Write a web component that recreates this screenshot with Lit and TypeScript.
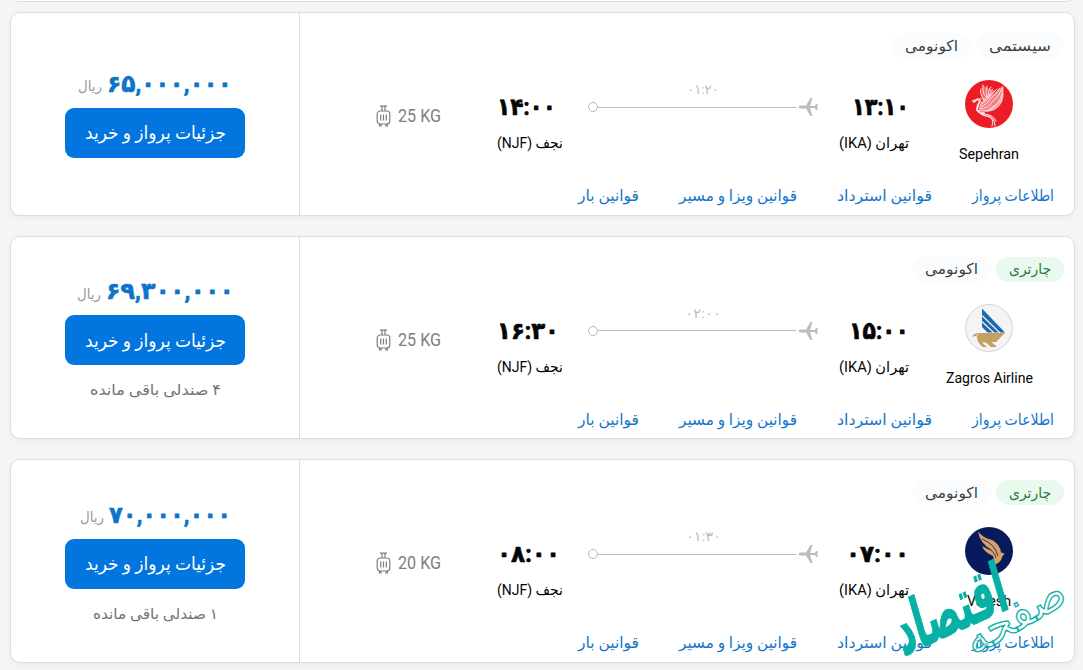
import { LitElement, html, svg, css } from "lit";
import { customElement, property } from "lit/decorators.js";

type Label = [text: string, width: number];

interface Flight {
  tags: { label: Label; charter?: boolean }[];
  logo: "sepehran" | "zagros" | "varesh";
  airline: Label;
  departure: Label;
  duration: Label;
  arrival: Label;
  baggage: string;
  price: Label;
  seats?: Label;
}

const FLIGHTS: Flight[] = [
  {
    tags: [{ label: ["سیستمی", 62] }, { label: ["اکونومی", 53] }],
    logo: "sepehran",
    airline: ["Sepehran", 60],
    departure: ["۱۳:۱۰", 57],
    duration: ["۰۱:۲۰", 32],
    arrival: ["۱۴:۰۰", 59],
    baggage: "25 KG",
    price: ["۶۵,۰۰۰,۰۰۰", 125],
  },
  {
    tags: [{ label: ["چارتری", 42], charter: true }, { label: ["اکونومی", 53] }],
    logo: "zagros",
    airline: ["Zagros Airline", 87],
    departure: ["۱۵:۰۰", 60],
    duration: ["۰۲:۰۰", 36],
    arrival: ["۱۶:۳۰", 62],
    baggage: "25 KG",
    price: ["۶۹,۳۰۰,۰۰۰", 128],
    seats: ["۴ صندلی باقی مانده", 131],
  },
  {
    tags: [{ label: ["چارتری", 42], charter: true }, { label: ["اکونومی", 53] }],
    logo: "varesh",
    airline: ["Varesh", 44],
    departure: ["۰۷:۰۰", 63],
    duration: ["۰۱:۳۰", 35],
    arrival: ["۰۸:۰۰", 63],
    baggage: "20 KG",
    price: ["۷۰,۰۰۰,۰۰۰", 122],
    seats: ["۱ صندلی باقی مانده", 125],
  },
];

const LINKS: Label[] = [
  ["اطلاعات پرواز", 82],
  ["قوانین استرداد", 95],
  ["قوانین ویزا و مسیر", 118],
  ["قوانین بار", 61],
];

/** A single line of text set to an exact measure. */
@customElement("fit-text")
export class FitText extends LitElement {
  @property() text = "";
  @property({ type: Number }) measure = 50;
  @property({ type: Number }) size = 15;

  static styles = css`
    :host {
      display: block;
      flex: none;
      line-height: 0;
    }
    .line {
      display: block;
      overflow: visible;
      fill: currentColor;
      stroke: currentColor;
      stroke-width: var(--extra-weight, 0);
      stroke-linejoin: round;
    }
  `;

  render() {
    const h = Math.round(this.size * 1.6);
    return html`<svg class="line" width=${this.measure} height=${h}>
      <text
        x=${this.measure / 2}
        y=${h / 2 + this.size * 0.36}
        text-anchor="middle"
        font-size=${this.size}
        textLength=${this.measure}
        lengthAdjust="spacingAndGlyphs"
      >${this.text}</text>
    </svg>`;
  }
}

@customElement("airline-logo")
export class AirlineLogo extends LitElement {
  @property() name = "";

  static styles = css`
    :host {
      display: block;
      width: 48px;
      height: 48px;
    }
    .mark {
      display: block;
    }
  `;

  private sepehran() {
    return svg`
      <circle cx="24" cy="24" r="24" fill="#ec1c27" />
      <path fill="#fbd9da" fill-opacity=".55" d="M14 31Q13 24 20 19Q29 14 38 6Q40 18 36 24Q32 31 22 32Z" />
      <path fill="#fbd9da" fill-opacity=".4" d="M19 20Q14 13 18 5Q22 9 28 9Q25 14 24 18Z" />
      <g fill="none" stroke="#fde6e6" stroke-linecap="round">
        <path stroke-width=".9" d="M14 31Q22 32 29 27Q37 21 38 7M15 29Q23 29 27 22Q34 17 37 8M15 27Q22 25 25 19Q32 14 35 8M15 25Q21 22 24 17Q29 12 32 9M16 23Q21 17 29 11M21 31Q30 31 36 22L38 14M25 29L37 20" />
        <path stroke-width=".9" d="M22 18Q17 15 18 5M22 17Q20 11 22 6M23 17Q23 10 26 7M24 17Q25 12 28 9M19 20Q14 13 16 9M13 20Q17 17 20 20" />
        <path stroke-width="2" d="M9 22Q13 17 15 21Q12 25 12 30Q15 34 19 33" />
        <path stroke-width="1" d="M15 33Q18 37 24 36Q30 38 30 46M16 34Q22 35 27 39Q29 42 27 46M18 34Q28 34 31 41M7 21L10 20" />
      </g>`;
  }

  private zagros() {
    return svg`
      <circle cx="24" cy="24" r="23.5" fill="#f4f4f5" stroke="#d3d4d6" />
      <path fill="#1d69ae" d="M17 4.500L40 28.500H22L17 24Z" />
      <path fill="none" stroke="#f4f4f5" stroke-width="1.1" d="M17 11.500L35 29M17 17.500L29 29" />
      <path fill="#f4f4f5" d="M17 23L23 29H17Z" />
      <path fill="#c4a063" d="M7 33Q9 29 14 29L40 29L31 38H26.500L32 43H26L21 38.500L17 38.500L22 43H18Q12 39 12 32.500L10 32Z" />
      <circle cx="12.300" cy="31" r=".7" fill="#fff" />`;
  }

  private varesh() {
    return svg`
      <circle cx="24" cy="24" r="24" fill="#071b5c" />
      <path fill="#d8a068" d="M13 4.500Q18 11 27 13Q35 17 36 25.500L39.500 26.500Q37 29 36 33Q32 39 24 38Q31 34 28 29Q19 25 17 19Q22 22 27 23Q15 17 13 4.500Z" />
      <path fill="none" stroke="#071b5c" stroke-width=".8" d="M17 12Q30 17 33 29M21 21Q29 23 31 31" />`;
  }

  render() {
    const art =
      this.name === "sepehran" ? this.sepehran() : this.name === "zagros" ? this.zagros() : this.varesh();
    return html`<svg class="mark" width="48" height="48" viewBox="0 0 48 48">${art}</svg>`;
  }
}

@customElement("flight-card")
export class FlightCard extends LitElement {
  @property({ attribute: false }) flight!: Flight;

  static styles = css`
    :host {
      display: flex;
      box-sizing: border-box;
      height: 203.5px;
      border: 1px solid #dcdddf;
      border-radius: 10px;
      background: #fff;
      box-shadow: 0 2px 6px rgba(0, 0, 0, 0.05);
      overflow: hidden;
    }
    .main {
      flex: 1;
      display: flex;
      flex-direction: column;
    }
    .tags {
      display: flex;
      gap: 5px;
      padding: 20px 10px 0;
    }
    .tag {
      display: flex;
      align-items: center;
      height: 25px;
      padding: 0 13px;
      border-radius: 13px;
      background: #fafcfd;
      color: #3b3f45;
    }
    .charter {
      background: #e9f9ee;
      color: #2f8044;
    }
    .route {
      display: flex;
      height: 115px;
      padding-right: 25px;
    }
    .airline {
      display: flex;
      flex-direction: column;
      align-items: center;
      width: 120px;
      padding-top: 22px;
      gap: 13px;
    }
    .stop {
      display: flex;
      flex-direction: column;
      width: 70px;
      padding-top: 29px;
      gap: 6px;
    }
    .from {
      margin-right: 20px;
    }
    .to {
      margin-right: 21px;
      align-items: flex-end;
    }
    .time {
      font-weight: 700;
      --extra-weight: 0.7px;
    }
    .path {
      width: 230px;
      margin-right: 21px;
      padding-top: 21px;
      display: flex;
      flex-direction: column;
      align-items: center;
      color: #b9bcc1;
    }
    .track {
      display: flex;
      align-items: center;
      align-self: stretch;
      height: 20px;
      margin-top: -3px;
    }
    .line {
      flex: 1;
      height: 1px;
      margin-right: 2px;
      background: #b9bcc1;
    }
    .dot {
      box-sizing: border-box;
      width: 10px;
      height: 10px;
      border: 1px solid #b4b7bb;
      border-radius: 50%;
    }
    .bag {
      display: flex;
      direction: ltr;
      align-items: center;
      gap: 7px;
      height: 24px;
      margin: 46px 56px 0 0;
      color: #7b7e82;
    }
    .links {
      display: flex;
      gap: 40px;
      padding: 10px 20px 0;
      color: #1376c8;
    }
    .offer {
      box-sizing: border-box;
      width: 289px;
      border-right: 1px solid #dcdddf;
      display: flex;
      flex-direction: column;
      align-items: center;
      justify-content: center;
    }
    .price {
      display: flex;
      direction: ltr;
      align-items: center;
      gap: 5px;
      height: 38px;
      color: #0d74c9;
    }
    .amount {
      font-weight: 700;
      margin-top: -12px;
      --extra-weight: 0.6px;
    }
    .unit {
      margin-top: -5px;
      color: #96999e;
    }
    .buy {
      display: flex;
      align-items: center;
      justify-content: center;
      width: 180px;
      height: 50px;
      padding: 0;
      border: 0;
      border-radius: 9px;
      background: #0276de;
      color: #fff;
      font: inherit;
    }
    .seats {
      display: flex;
      align-items: flex-end;
      height: 37px;
      margin-bottom: -5px;
      color: #707377;
    }
  `;

  private line([text, width]: Label, size: number, cls = "") {
    return html`<fit-text class=${cls} .text=${text} .measure=${width} .size=${size}></fit-text>`;
  }

  render() {
    const f = this.flight;
    return html`
      <div class="main">
        <div class="tags">
          ${f.tags.map((t) => html`<div class="tag ${t.charter ? "charter" : ""}">${this.line(t.label, 15)}</div>`)}
        </div>
        <div class="route">
          <div class="airline">
            <airline-logo name=${f.logo}></airline-logo>
            ${this.line(f.airline, 15.5)}
          </div>
          <div class="stop from">
            ${this.line(f.departure, 24, "time")} ${this.line(["تهران (IKA)", 70], 15)}
          </div>
          <div class="path">
            ${this.line(f.duration, 13)}
            <div class="track">
              <svg width="20" height="20" viewBox="0 0 20 20" fill="#b9bcc1">
                <path d="M.5 10Q.8 8.500 3 8.500H8L12.500 1H14.500L12 8.900H17L18 7H19.500V13H18L17 11.100H12L14.500 19H12.500L8 11.500H3Q.8 11.500.5 10Z" />
              </svg>
              <div class="line"></div>
              <div class="dot"></div>
            </div>
          </div>
          <div class="stop to">
            ${this.line(f.arrival, 24, "time")} ${this.line(["نجف (NJF)", 66], 15)}
          </div>
          <div class="bag">
            <svg width="15" height="22" viewBox="0 0 15 22" fill="none" stroke="#7b7e82" stroke-width="1.2">
              <path d="M4 1.2H11M6 1.5V6M9 1.5V6M4.700 9.500V15.500M7.5 9.500V15.500M10.300 9.500V15.500M3.500 19V21H5V19M10 19V21H11.500V19" />
              <rect x="1.200" y="6" width="12.600" height="13" rx="3" />
            </svg>
            ${this.line([f.baggage, 43], 17.5)}
          </div>
        </div>
        <div class="links">${LINKS.map((l) => this.line(l, 15.5))}</div>
      </div>
      <div class="offer">
        <div class="price">
          ${this.line(["ریال", 24], 14, "unit")} ${this.line(f.price, 24, "amount")}
        </div>
        <button class="buy">${this.line(["جزئیات پرواز و خرید", 141], 18)}</button>
        ${f.seats ? html`<div class="seats">${this.line(f.seats, 15)}</div>` : ""}
      </div>
    `;
  }
}

@customElement("app-root")
export class AppRoot extends LitElement {
  static styles = css`
    :host {
      display: block;
      position: relative;
      box-sizing: border-box;
      height: 670px;
      padding: 0 8px 0 10px;
      overflow: hidden;
      direction: rtl;
      background: #f5f5f5;
      color: #050505;
      font-family: Roboto, "DejaVu Sans", sans-serif;
    }
    .previous {
      height: 20px;
      margin: -19px 0 10px;
      border-bottom: 1px solid #dcdddf;
      border-radius: 10px;
      background: #fff;
    }
    .list {
      display: grid;
      gap: 20px;
    }
    .watermark {
      position: absolute;
      left: 893px;
      top: 520px;
      overflow: visible;
      font-family: "DejaVu Sans", sans-serif;
    }
    .solid {
      font-weight: 700;
      fill: #06b0a5;
      stroke: #06b0a5;
      stroke-width: 1px;
    }
    .outlined {
      fill: #fff;
      fill-opacity: 0.5;
      stroke: #06b0a5;
      stroke-width: 1.3px;
    }
  `;

  render() {
    return html`
      <div class="previous"></div>
      <div class="list">${FLIGHTS.map((f) => html`<flight-card .flight=${f}></flight-card>`)}</div>
      <svg class="watermark" width="190" height="150">
        <text
          class="outlined"
          transform="translate(129 109) rotate(-30)"
          text-anchor="middle"
          font-size="46"
          textLength="110"
          lengthAdjust="spacingAndGlyphs"
        >صفحه</text>
        <text
          class="solid"
          transform="translate(64 112) rotate(-24) skewX(-8)"
          text-anchor="middle"
          font-size="68"
          textLength="118"
          lengthAdjust="spacingAndGlyphs"
        >اقتصاد</text>
      </svg>
    `;
  }
}
